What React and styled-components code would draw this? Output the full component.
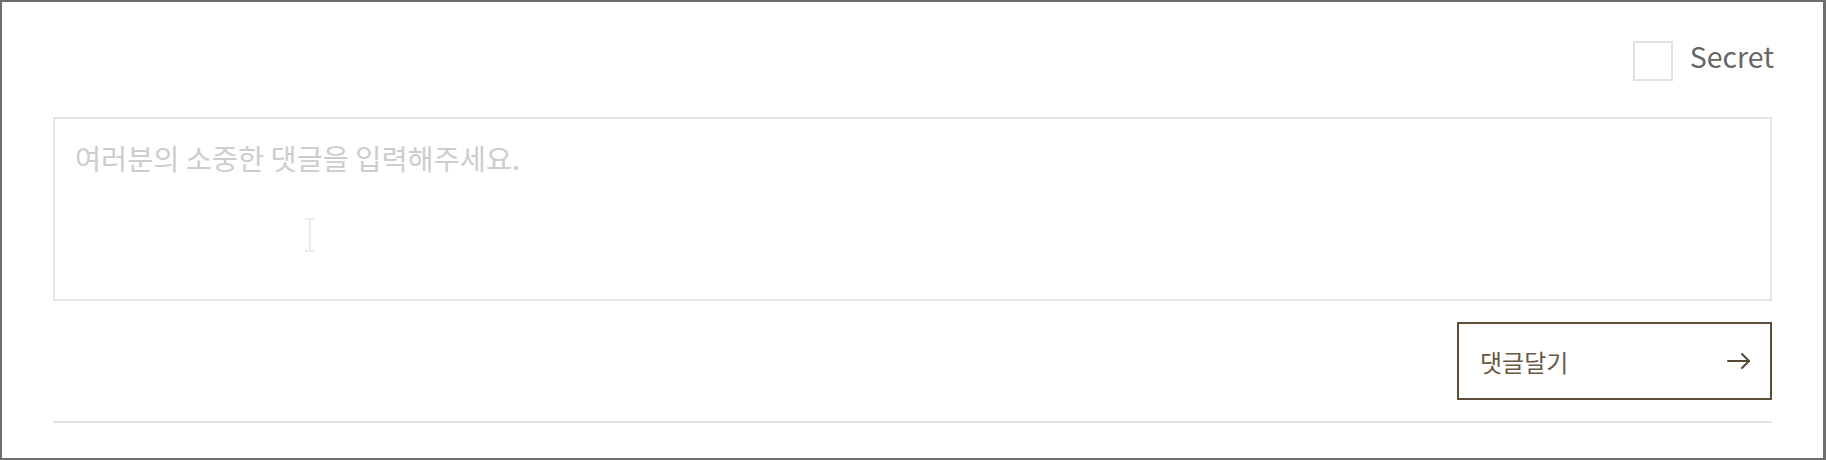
import styled, { createGlobalStyle } from "styled-components"

const GlobalStyle = createGlobalStyle`
    * {
        box-sizing: border-box;
    }
    body {
        margin: 0;
        background: #fff;
        font-family: "Noto Sans CJK KR", "Noto Sans", sans-serif;
    }
`

const Frame = styled.div`
    width: 1826px;
    height: 460px;
    border: 2px solid #6e6e6e;
    border-right-width: 3px;
    padding: 39px 51px 0 51px;
    display: flex;
    flex-direction: column;
`

const SecretRow = styled.label`
    display: flex;
    justify-content: flex-end;
    align-items: center;
    gap: 17px;
    height: 40px;
    margin-right: -2px;
    cursor: pointer;
`

const Check = styled.span`
    width: 40px;
    height: 40px;
    border: 2px solid #e2e2e2;
    background: #fff;
`

const SecretText = styled.span`
    font-size: 28.5px;
    color: #666;
    line-height: 1;
    margin-bottom: 9px;
`

const InputBox = styled.div`
    position: relative;
    margin-top: 36px;
    height: 184px;
    border: 2px solid #e6e6e6;
    padding: 19px 20px 17px;
`

const TextArea = styled.textarea`
    width: 100%;
    height: 100%;
    border: none;
    outline: none;
    resize: none;
    padding: 0;
    font-family: inherit;
    font-size: 28.4px;
    line-height: 1.4;
    color: #333;

    &::placeholder {
        color: #cdcdcd;
    }
`

const Cursor = styled.svg`
    position: absolute;
    left: 248px;
    top: 99px;
    pointer-events: none;
`

const Actions = styled.div`
    display: flex;
    justify-content: flex-end;
    margin-top: 21px;
`

const SubmitButton = styled.button`
    width: 315px;
    height: 78px;
    border: 2px solid #5c4c38;
    background: #fff;
    padding: 0 19px 0 21px;
    display: flex;
    align-items: center;
    justify-content: space-between;
    font-family: inherit;
    font-size: 24px;
    color: #6a5843;
    cursor: pointer;
`

const Divider = styled.hr`
    margin: 21px 0 0;
    border: none;
    border-top: 2px solid #e3e3e3;
`

const Arrow = () => (
    <svg width="24" height="18" viewBox="0 0 24 18" fill="none" stroke="#574733" strokeWidth="2" strokeLinecap="round" strokeLinejoin="round">
        <path d="M1 9h21" />
        <path d="M15 2l7 7-7 7" />
    </svg>
)

const App = () => {
  return (
    <>
        <GlobalStyle />
        <Frame>
            <SecretRow>
                <Check />
                <SecretText>Secret</SecretText>
            </SecretRow>
            <InputBox>
                <TextArea placeholder="여러분의 소중한 댓글을 입력해주세요." />
                <Cursor width="14" height="34" viewBox="0 0 14 34" fill="none" stroke="#e6e6e6" strokeWidth="1.5">
                    <path d="M2 1h4l1 1 1-1h4M7 2v30M2 33h4l1-1 1 1h4" />
                </Cursor>
            </InputBox>
            <Actions>
                <SubmitButton>
                    <span>댓글달기</span>
                    <Arrow />
                </SubmitButton>
            </Actions>
            <Divider />
        </Frame>
    </>
  )
}

export default App
